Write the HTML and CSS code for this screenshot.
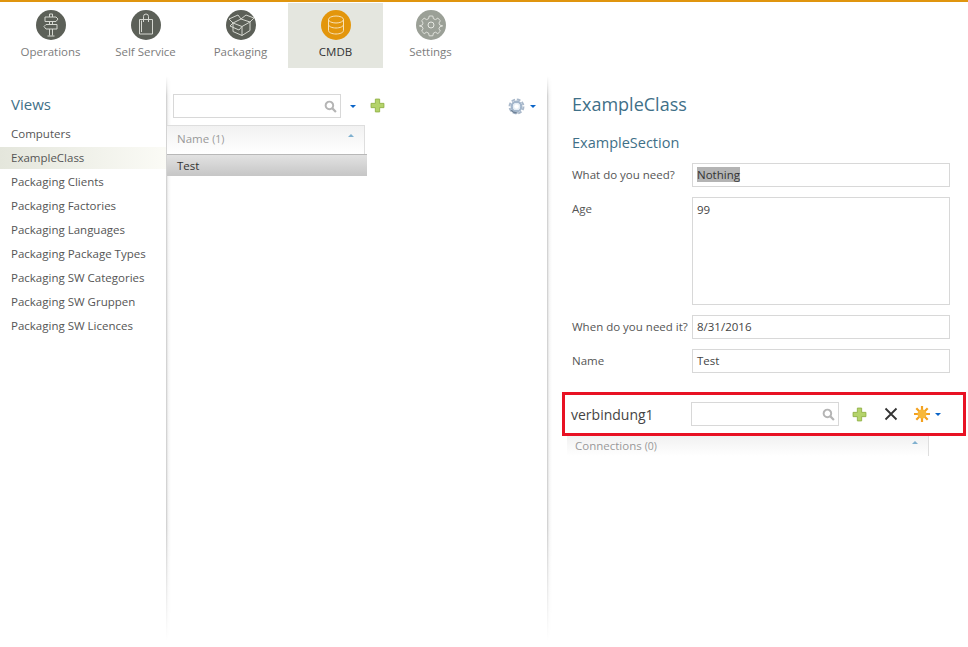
FILE: index.html
```html
<!DOCTYPE html>
<html lang="en">
<head>
    <meta charset="UTF-8">
    <title>CMDB</title>
    <link rel="stylesheet" href="styles.css">
</head>
<body>
    <nav class="topnav">
        <a class="nav-item">
            <svg class="nav-icon" viewBox="0 0 30 30">
                <circle cx="15" cy="15" r="15" fill="#5c6058"/>
                <g fill="none" stroke="#d5d7d0" stroke-width="1">
                    <path d="M13.500 4h3v3M13.500 4v3M13.500 11.500v3M16.500 11.500v3M13.500 19v6.500M16.500 19v6.500M11.500 26h7"/>
                    <path d="M9 7h11l2 2-2 2.500H9zM21 14.500H10l-2 2 2 2.500h11z"/>
                </g>
            </svg>
            <span>Operations</span>
        </a>
        <a class="nav-item">
            <svg class="nav-icon" viewBox="0 0 30 30">
                <circle cx="15" cy="15" r="15" fill="#5c6058"/>
                <g fill="none" stroke="#d5d7d0" stroke-width="1">
                    <path d="M8.500 9.500h13v14.500h-13zM10.500 10.500v11.500"/>
                    <path d="M12.500 12V6.500q0-2.500 2.500-2.500t2.500 2.500V12"/>
                </g>
            </svg>
            <span>Self Service</span>
        </a>
        <a class="nav-item">
            <svg class="nav-icon" viewBox="0 0 30 30">
                <circle cx="15" cy="15" r="15" fill="#5c6058"/>
                <g fill="none" stroke="#d5d7d0" stroke-width="1">
                    <path d="M7 13l9 3.500 8-4.500-9-3zM7 13v8.500l9 4V16.500M24 12v8.500l-8 5"/>
                    <path d="M7 13L3 9l9-4 3 4M24 12l4-4-8-3-5 4M16 16.500l-3 3.500-9-4 3-3"/>
                </g>
            </svg>
            <span>Packaging</span>
        </a>
        <a class="nav-item nav-active">
            <svg class="nav-icon" viewBox="0 0 30 30">
                <circle cx="15" cy="15" r="15" fill="#e3960c"/>
                <g fill="none" stroke="#f8e2b8" stroke-width="1">
                    <ellipse cx="15" cy="9.500" rx="7.500" ry="3.500"/>
                    <path d="M7.500 9.500v11c0 2 3.500 3.500 7.500 3.500s7.500-1.500 7.500-3.500v-11"/>
                    <path d="M7.500 14.500c0 2 3.500 3.500 7.500 3.500s7.500-1.500 7.500-3.500"/>
                </g>
            </svg>
            <span>CMDB</span>
        </a>
        <a class="nav-item">
            <svg class="nav-icon" viewBox="0 0 30 30">
                <circle cx="15" cy="15" r="15" fill="#9ba097"/>
                <g fill="none" stroke="#e6e8e2" stroke-width="1">
                    <circle cx="15" cy="15" r="3"/>
                    <path d="M13 5h4l.7 3 2.300 1 2.600-1.600 2.800 2.800-1.600 2.600 1 2.300 3 .7v.4l-3 .7-1 2.300 1.600 2.600-2.800 2.800-2.600-1.600-2.300 1-.7 3h-4l-.7-3-2.300-1-2.600 1.600-2.800-2.800 1.600-2.600-1-2.300-3-.7v-.4l3-.7 1-2.300L4.600 10.200l2.800-2.800L10 9l2.300-1z" transform="translate(1.500 1.500) scale(.9)"/>
                </g>
            </svg>
            <span>Settings</span>
        </a>
    </nav>

    <main class="content">
        <aside class="views">
            <h2 class="views-title">Views</h2>
            <ul class="views-list">
                <li>Computers</li>
                <li class="selected">ExampleClass</li>
                <li>Packaging Clients</li>
                <li>Packaging Factories</li>
                <li>Packaging Languages</li>
                <li>Packaging Package Types</li>
                <li>Packaging SW Categories</li>
                <li>Packaging SW Gruppen</li>
                <li>Packaging SW Licences</li>
            </ul>
        </aside>
        <div class="divider"></div>

        <section class="records">
            <div class="records-toolbar">
                <div class="search search-wide">
                    <svg class="search-icon" viewBox="0 0 12 12"><circle cx="5" cy="5" r="3.500" fill="none" stroke="#b5b5b5" stroke-width="1.800"/><path d="M7.500 7.500l3.500 3.500" stroke="#b5b5b5" stroke-width="2"/></svg>
                </div>
                <span class="caret caret-search"></span>
                <svg class="plus plus-records" viewBox="0 0 14 14"><path d="M5 1h4v4h4v4H9v4H5V9H1V5h4z" fill="#b4d36a" stroke="#8fb044" stroke-width=".8"/></svg>
                <svg class="cog" viewBox="0 0 16 16">
                    <circle cx="8" cy="8" r="6.600" fill="none" stroke="#a9b8ca" stroke-width="1.800" stroke-dasharray="3.500 1.700"/>
                    <circle cx="8" cy="8" r="4.500" fill="none" stroke="#a3b6cb" stroke-width="2.200"/>
                    <circle cx="8" cy="8" r="2.800" fill="none" stroke="#e3ecf4" stroke-width="1.200"/>
                    <path d="M3 11.500q2 3 6 2.500" fill="none" stroke="#6f8298" stroke-width="1.200"/>
                </svg>
                <span class="caret"></span>
            </div>
            <div class="grid-head grid-head-records">
                <span>Name <small>(1)</small></span>
                <span class="sort-arrow"></span>
            </div>
            <div class="grid-row">Test</div>
        </section>
        <div class="divider"></div>

        <section class="details">
            <h1 class="details-title">ExampleClass</h1>
            <h2 class="details-section">ExampleSection</h2>
            <div class="form">
                <label>What do you need?</label>
                <div class="field"><span class="highlight">Nothing</span></div>
                <label>Age</label>
                <div class="field field-area">99</div>
                <label>When do you need it?</label>
                <div class="field">8/31/2016</div>
                <label>Name</label>
                <div class="field">Test</div>
            </div>

            <div class="relation">
                <span class="relation-name">verbindung1</span>
                <div class="search search-small">
                    <svg class="search-icon" viewBox="0 0 12 12"><circle cx="5" cy="5" r="3.500" fill="none" stroke="#b5b5b5" stroke-width="1.800"/><path d="M7.500 7.500l3.500 3.500" stroke="#b5b5b5" stroke-width="2"/></svg>
                </div>
                <svg class="plus plus-relation" viewBox="0 0 14 14"><path d="M5 1h4v4h4v4H9v4H5V9H1V5h4z" fill="#b4d36a" stroke="#8fb044" stroke-width=".8"/></svg>
                <svg class="cross" viewBox="0 0 14 14"><path d="M1.500 1.500l11 11M12.500 1.500l-11 11" stroke="#333" stroke-width="1.800"/></svg>
                <svg class="sun" viewBox="0 0 16 16">
                    <g stroke="#f3a11f" stroke-width="2.200">
                        <path d="M8 0v16M0 8h16M2.300 2.300l11.400 11.400M13.700 2.300L2.300 13.700"/>
                    </g>
                    <circle cx="8" cy="8" r="4.500" fill="#f8b83a"/>
                </svg>
                <span class="caret"></span>
            </div>
            <div class="grid-head grid-head-conn">
                <span>Connections <small>(0)</small></span>
                <span class="sort-arrow"></span>
            </div>
        </section>
    </main>
</body>
</html>
```

FILE: styles.css
```css
* {
    box-sizing: border-box;
}
html, body {
    height: 100%;
}
body {
    margin: 0;
    background-color: #fff;
    color: #555;
    font-family: "Open Sans", "Noto Sans", sans-serif;
    font-size: 11.5px;
    overflow: hidden;
}

/* top navigation */
.topnav {
    display: flex;
    height: 68px;
    padding-left: 3px;
    border-top: 2px solid #e0950e;
}
.nav-item {
    display: flex;
    flex-direction: column;
    align-items: center;
    width: 95px;
    height: 65px;
    margin-top: 1px;
    padding-top: 7px;
    color: #7c7c7c;
}
.nav-item span {
    margin-top: 4px;
    line-height: 16px;
}
.nav-active {
    background-color: #e4e6df;
    color: #333;
}
.nav-icon {
    width: 30px;
    height: 30px;
}

.content {
    display: flex;
    height: 579px;
}
.divider {
    flex: none;
    width: 5px;
    margin-top: 8px;
    margin-bottom: 6px;
    background: linear-gradient(to right, #c9c9c9, #f4f4f4 40%, #fff);
    -webkit-mask-image: linear-gradient(to bottom, transparent, #000 20px, #000 80%, transparent);
    mask-image: linear-gradient(to bottom, transparent, #000 20px, #000 80%, transparent);
}

/* views column */
.views {
    flex: none;
    width: 166px;
}
.views-title {
    margin: 25px 0 8px 11px;
    color: #3f7088;
    font-size: 15px;
    font-weight: 400;
    line-height: 22px;
}
.views-list {
    margin: 0;
    padding: 0;
    list-style: none;
}
.views-list li {
    height: 22px;
    margin-bottom: 2px;
    padding-left: 11px;
    line-height: 22px;
}
.views-list .selected {
    background: linear-gradient(to right, #e4e6dc, #fbfbf6);
}

/* records column */
.records {
    flex: none;
    position: relative;
    width: 380px;
    margin-left: -4px;
}
.records-toolbar {
    display: flex;
    align-items: center;
    height: 24px;
    margin: 26px 0 7px 6px;
}
.search {
    display: flex;
    flex: none;
    align-items: center;
    justify-content: flex-end;
    height: 24px;
    padding-right: 3px;
    border: 1px solid #d8d8d8;
    background-color: #fff;
}
.search-wide {
    width: 168px;
}
.search-icon {
    width: 13px;
    height: 13px;
}
.caret {
    flex: none;
    width: 0;
    height: 0;
    margin-left: 9px;
    border-left: 3px solid transparent;
    border-right: 3px solid transparent;
    border-top: 3px solid #0a64c8;
}
.plus {
    flex: none;
    width: 15px;
    height: 15px;
}
.plus-records {
    margin-left: 14px;
    margin-top: -2px;
}
.cog {
    flex: none;
    width: 17px;
    height: 17px;
    margin-left: 123px;
}
.cog + .caret {
    margin-left: 5px;
}

.grid-head {
    display: flex;
    justify-content: space-between;
    padding: 3px 10px 0 10px;
    border-top: 1px solid #dedede;
    border-right: 1px solid #dedede;
    color: #999;
    line-height: 20px;
    background: linear-gradient(to bottom, #f1f1f1, #fff);
}
.grid-head small {
    font-size: 10.5px;
}
.grid-head-records {
    width: 198px;
    height: 29px;
}
.sort-arrow {
    width: 0;
    height: 0;
    margin: 5px 0 0 0;
    border-left: 3.5px solid transparent;
    border-right: 3.5px solid transparent;
    border-bottom: 3.5px solid #7fb0cf;
}
.grid-row {
    width: 200px;
    height: 22px;
    padding-left: 10px;
    border-top: 1px solid #b8b8b8;
    color: #333;
    line-height: 22px;
    background: linear-gradient(to bottom, #e2e2e2, #c6c6c6);
}

/* details column */
.details {
    flex: 1;
    min-width: 0;
    padding-left: 15px;
}
.details-title {
    margin: 24px 0 0 5px;
    color: #3f7088;
    font-size: 18px;
    font-weight: 400;
    line-height: 24px;
}
.details-section {
    margin: 17px 0 10px 5px;
    color: #3f7088;
    font-size: 14.5px;
    font-weight: 400;
    line-height: 20px;
}
.form {
    display: grid;
    grid-template-columns: 120px 258px;
    row-gap: 10px;
    margin-left: 5px;
}
.form label {
    line-height: 24px;
}
.field {
    height: 24px;
    padding-left: 4px;
    border: 1px solid #d8d8d8;
    color: #444;
    line-height: 22px;
}
.field-area {
    height: 108px;
    padding-top: 1px;
}
.highlight {
    background-color: #b4b4b4;
    color: #333;
}
.relation {
    display: flex;
    align-items: center;
    width: 404px;
    height: 44px;
    margin: 19px 0 0 -5px;
    padding-left: 6px;
    border: 3px solid #e81123;
}
.relation-name {
    flex: none;
    width: 120px;
    color: #444;
    font-size: 14px;
}
.search-small {
    width: 148px;
}
.plus-relation {
    margin-left: 13px;
}
.cross {
    flex: none;
    width: 14px;
    height: 14px;
    margin-left: 17px;
}
.sun {
    flex: none;
    width: 16px;
    height: 16px;
    margin-left: 16px;
}
.sun + .caret {
    margin-left: 5px;
}
.grid-head-conn {
    width: 362px;
    height: 20px;
    padding: 0 10px 0 8px;
    border-top: 0;
}
```
